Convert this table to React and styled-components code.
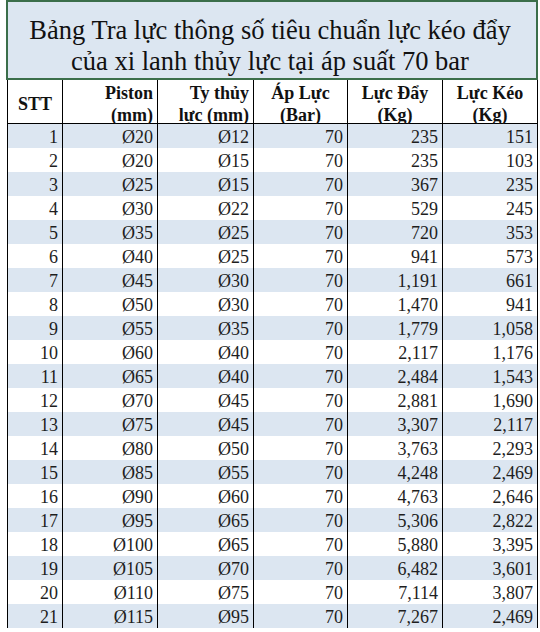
import React from 'react';
import styled, { createGlobalStyle } from 'styled-components';

const GlobalStyle = createGlobalStyle`
    html, body {
        margin: 0;
        padding: 0;
        background: #ffffff;
    }
    body {
        font-family: "Liberation Serif", "Times New Roman", serif;
        color: #1a1a1a;
    }
`;

/*CSS*/

const Sheet = styled.div`
    width: 540px;
    height: 632px;
    overflow: hidden;
    display: flex;
    flex-direction: column;
    font-family: "Liberation Serif", "Times New Roman", serif;
`;

const TitleBox = styled.div`
    margin-left: 6px;
    width: 532px;
    height: 80px;
    box-sizing: border-box;
    border: 2px solid #3b6e4a;
    background: #dce6f1;
    display: flex;
    flex-direction: column;
    align-items: center;
    justify-content: flex-start;
    padding-top: 13px;
    padding-right: 4px;
    font-family: "Liberation Serif", "Times New Roman", serif;
    font-size: 26.5px;
    line-height: 31px;
    color: #111;
`;

const Grid = styled.div`
    margin-left: 7px;
    width: 531px;
    box-sizing: border-box;
    border-left: 1px solid #000;
    display: grid;
    grid-template-columns: 55px 95px 96px 94px 95px 95px;
`;

const HeadCell = styled.div`
    height: 44px;
    box-sizing: border-box;
    border-right: 1px solid #000;
    border-bottom: 1px solid #000;
    display: flex;
    flex-direction: column;
    justify-content: center;
    align-items: ${props => props.align || 'center'};
    padding: 5px 4px 0 4px;
    font-family: "Liberation Serif", "Times New Roman", serif;
    font-weight: bold;
    font-size: 18px;
    line-height: 22px;
    color: #111;
    text-align: ${props => (props.align === 'flex-end' ? 'right' : 'center')};
`;

const Cell = styled.div`
    height: 24px;
    box-sizing: border-box;
    border-right: 1px solid #000;
    background: ${props => (props.shaded ? '#dce6f1' : '#ffffff')};
    display: flex;
    align-items: center;
    justify-content: flex-end;
    padding: 2px 4px 0 0;
    font-family: "Liberation Serif", "Times New Roman", serif;
    font-size: 18px;
    color: #1e1e1e;
`;

const rows = [
    [1, 'Ø20', 'Ø12', 70, '235', '151'],
    [2, 'Ø20', 'Ø15', 70, '235', '103'],
    [3, 'Ø25', 'Ø15', 70, '367', '235'],
    [4, 'Ø30', 'Ø22', 70, '529', '245'],
    [5, 'Ø35', 'Ø25', 70, '720', '353'],
    [6, 'Ø40', 'Ø25', 70, '941', '573'],
    [7, 'Ø45', 'Ø30', 70, '1,191', '661'],
    [8, 'Ø50', 'Ø30', 70, '1,470', '941'],
    [9, 'Ø55', 'Ø35', 70, '1,779', '1,058'],
    [10, 'Ø60', 'Ø40', 70, '2,117', '1,176'],
    [11, 'Ø65', 'Ø40', 70, '2,484', '1,543'],
    [12, 'Ø70', 'Ø45', 70, '2,881', '1,690'],
    [13, 'Ø75', 'Ø45', 70, '3,307', '2,117'],
    [14, 'Ø80', 'Ø50', 70, '3,763', '2,293'],
    [15, 'Ø85', 'Ø55', 70, '4,248', '2,469'],
    [16, 'Ø90', 'Ø60', 70, '4,763', '2,646'],
    [17, 'Ø95', 'Ø65', 70, '5,306', '2,822'],
    [18, 'Ø100', 'Ø65', 70, '5,880', '3,395'],
    [19, 'Ø105', 'Ø70', 70, '6,482', '3,601'],
    [20, 'Ø110', 'Ø75', 70, '7,114', '3,807'],
    [21, 'Ø115', 'Ø95', 70, '7,267', '2,469'],
];

export default function App() {
    return (
        <Sheet>
            <GlobalStyle />
            <TitleBox>
                <div>Bảng Tra lực thông số tiêu chuẩn lực kéo đẩy</div>
                <div>của xi lanh thủy lực tại áp suất 70 bar</div>
            </TitleBox>
            <Grid>
                <HeadCell>STT</HeadCell>
                <HeadCell align="flex-end"><span>Piston</span><span>(mm)</span></HeadCell>
                <HeadCell align="flex-end"><span>Ty thủy</span><span>lực (mm)</span></HeadCell>
                <HeadCell><span>Áp Lực</span><span>(Bar)</span></HeadCell>
                <HeadCell><span>Lực Đẩy</span><span>(Kg)</span></HeadCell>
                <HeadCell><span>Lực Kéo</span><span>(Kg)</span></HeadCell>
                {rows.map((r, i) =>
                    r.map((v, j) => (
                        <Cell key={i + '-' + j} shaded={i % 2 === 0}>{v}</Cell>
                    ))
                )}
            </Grid>
        </Sheet>
    );
}
